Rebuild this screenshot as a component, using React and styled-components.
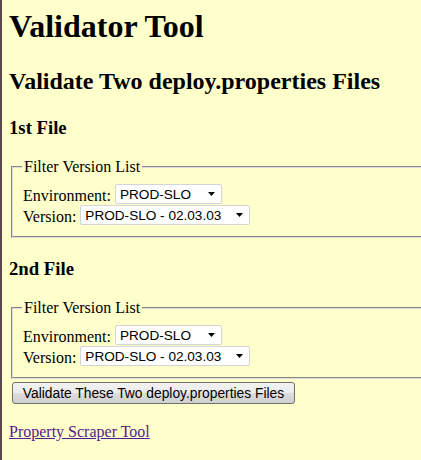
import React from "react";
import styled, { createGlobalStyle } from "styled-components";

const Global = createGlobalStyle`
  html { overflow: hidden; background: #ffffcc; }
  body {
    margin: 0;
    padding: 8px 0 0 7px;
    border-left: 2px solid #5b4949;
    min-height: 460px;
    box-sizing: border-box;
    background: #ffffcc;
    font-family: "Liberation Serif", "Times New Roman", serif;
    color: #000;
  }
`;

const Page = styled.div`
  width: 640px;
  display: flex;
  flex-direction: column;
  align-items: flex-start;
`;

const Title = styled.h1`
  margin: 0 0 22px;
  font-size: 32px;
  line-height: 37px;
  font-weight: bold;
`;

const Subtitle = styled.h2`
  margin: 0 0 22px;
  font-size: 24px;
  line-height: 28px;
  font-weight: bold;
`;

const SectionHeading = styled.h3`
  margin: ${(p) => (p.$first ? "0" : "20px")} 0 19px;
  font-size: 18.72px;
  line-height: 22px;
  font-weight: bold;
`;

const Fieldset = styled.fieldset`
  align-self: stretch;
  margin: 0 0 0 2px;
  padding: 0 10px 10px;
  border: 2px groove #dcdcdc;
  border-right: none;
  min-width: 0;
`;

const Legend = styled.legend`
  padding: 0 2px;
  font-size: 16px;
  line-height: 18px;
  margin-left: -1px;
`;

const Rows = styled.div`
  display: flex;
  flex-direction: column;
  padding-top: 8px;
`;

const Row = styled.div`
  display: flex;
  align-items: center;
  height: 21px;
  gap: 4px;
`;

const Label = styled.label`
  font-size: 16px;
  line-height: 20px;
  position: relative;
  top: 1px;
`;

const SelectWrap = styled.span`
  position: relative;
  display: inline-block;
  width: ${(p) => p.$w}px;
  height: 20px;
  align-self: flex-start;
`;

const Select = styled.select`
  appearance: none;
  -webkit-appearance: none;
  width: 100%;
  height: 20px;
  box-sizing: border-box;
  margin: 0;
  padding: 0 0 0 4px;
  border: 1px solid #d4d4d4;
  border-radius: 2px;
  background: #fff;
  font-family: "Liberation Sans", Arial, sans-serif;
  font-size: 13.6px;
  color: #000;
  outline: none;
`;

const Arrow = styled.svg`
  position: absolute;
  right: 6px;
  top: 8px;
  width: 8px;
  height: 4px;
  pointer-events: none;
`;

const Button = styled.button`
  margin: 3px 0 0 3px;
  height: 22px;
  width: 283px;
  padding: 0;
  border: 1px solid #707070;
  border-radius: 3px;
  background: linear-gradient(#f2f2f2 0%, #ebebeb 50%, #dddddd 51%, #cfcfcf 100%);
  font-family: "Liberation Sans", Arial, sans-serif;
  font-size: 13.8px;
  color: #000;
`;

const LinkPara = styled.p`
  margin: 19px 0 0 0;
  font-size: 16px;
  line-height: 18px;
`;

const Link = styled.a`
  color: #551a8b;
  text-decoration: underline;
`;

function Dropdown({ width, value }) {
  return (
    <SelectWrap $w={width}>
      <Select defaultValue={value}>
        <option>{value}</option>
      </Select>
      <Arrow viewBox="0 0 8 4">
        <path d="M0 0 H7 L3.5 4 Z" fill="#000" />
      </Arrow>
    </SelectWrap>
  );
}

function FilterBox() {
  return (
    <Fieldset>
      <Legend>Filter Version List</Legend>
      <Rows>
        <Row>
          <Label>Environment:</Label>
          <Dropdown width={107} value="PROD-SLO" />
        </Row>
        <Row>
          <Label>Version:</Label>
          <Dropdown width={170} value="PROD-SLO - 02.03.03" />
        </Row>
      </Rows>
    </Fieldset>
  );
}

export default function App() {
  return (
    <>
      <Global />
      <Page>
        <Title>Validator Tool</Title>
        <Subtitle>Validate Two deploy.properties Files</Subtitle>
        <SectionHeading $first>1st File</SectionHeading>
        <FilterBox />
        <SectionHeading>2nd File</SectionHeading>
        <FilterBox />
        <Button>Validate These Two deploy.properties Files</Button>
        <LinkPara>
          <Link href="#">Property Scraper Tool</Link>
        </LinkPara>
      </Page>
    </>
  );
}
